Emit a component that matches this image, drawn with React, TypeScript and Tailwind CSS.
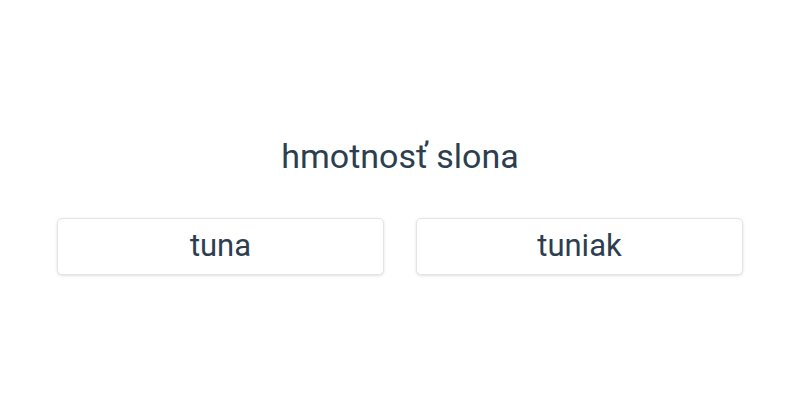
export default function App() {
  const options = ['tuna', 'tuniak'];
  return (
    <div
      className="flex h-[400px] w-full flex-col items-center justify-center bg-white px-[57px] pt-[10px] text-[#2c3e50]"
      style={{ fontFamily: 'Roboto, "Liberation Sans", sans-serif' }}
    >
      <h1 className="mb-[42px] text-[34px] leading-[40px]">hmotnosť slona</h1>
      <div className="grid w-full grid-cols-2 gap-[32px]">
        {options.map(option => (
          <button
            key={option}
            className="h-[57px] rounded-[5px] border border-[#e4e4e4] bg-white text-[31px] text-[#2c3e50] shadow-[0_1px_3px_rgba(0,0,0,0.12)]"
          >
            {option}
          </button>
        ))}
      </div>
    </div>
  );
}
